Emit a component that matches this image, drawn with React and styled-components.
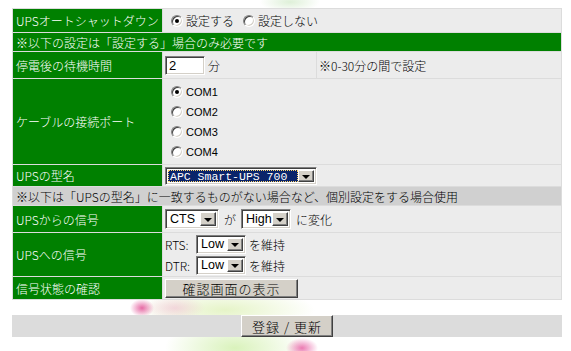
import React from "react";
import styled, { createGlobalStyle } from "styled-components";

const GlobalStyle = createGlobalStyle`
  html, body {
    margin: 0;
    padding: 0;
  }
  body {
    width: 571px;
    height: 351px;
    overflow: hidden;
    font-family: "Noto Sans CJK JP", "Noto Sans", sans-serif;
    font-size: 12px;
    font-weight: 300;
    color: #000;
    background:
      radial-gradient(ellipse 12px 9px at 142px 308px, rgba(226, 80, 150, 0.85), rgba(226, 80, 150, 0) 100%),
      radial-gradient(ellipse 16px 10px at 302px 348px, rgba(230, 90, 160, 0.8), rgba(230, 90, 160, 0) 100%),
      radial-gradient(ellipse 30px 12px at 175px 308px, rgba(240, 190, 210, 0.6), rgba(240, 190, 210, 0) 100%),
      radial-gradient(ellipse 70px 30px at 235px 348px, rgba(205, 238, 165, 0.75), rgba(205, 238, 165, 0) 100%),
      radial-gradient(ellipse 90px 22px at 225px 310px, rgba(225, 242, 190, 0.85), rgba(225, 242, 190, 0) 100%),
      radial-gradient(ellipse 30px 10px at 290px 2px, rgba(200, 230, 190, 0.6), rgba(200, 230, 190, 0) 100%),
      #fff;
  }
`;

const Page = styled.div`
  padding: 8px 9px 0 12px;
`;

const Table = styled.table`
  width: 550px;
  table-layout: fixed;
  border-collapse: separate;
  border-spacing: 1px;
  background: #dcdcdc;
`;

const Row = styled.tr`
  height: ${(p) => p.$h}px;
`;

const LabelCell = styled.td`
  background: #008000;
  color: #fff;
  padding: 0 3px;
  vertical-align: middle;
  white-space: nowrap;
`;

const ValueCell = styled.td`
  background: #ececec;
  padding: 0 2px;
  vertical-align: middle;
  white-space: nowrap;
`;

const NoteCell = styled.td`
  background: ${(p) => (p.$gray ? "#d0d0d0" : "#008000")};
  color: ${(p) => (p.$gray ? "#000" : "#fff")};
  padding: 0 3px;
  white-space: nowrap;
`;

const Inline = styled.div`
  display: flex;
  align-items: center;
  gap: ${(p) => p.$gap || 3}px;
`;

const Stack = styled.div`
  display: flex;
  flex-direction: column;
  gap: ${(p) => p.$gap || 0}px;
`;

const RadioLabel = styled.label`
  display: inline-flex;
  align-items: center;
  gap: 3px;
  margin-left: 6px;
  height: 20px;
  font-family: ${(p) => (p.$latin ? '"Liberation Sans", Arial, sans-serif' : "inherit")};
  font-size: ${(p) => (p.$latin ? 11 : 12)}px;
`;

const RadioDot = styled.span`
  position: relative;
  width: 12px;
  height: 12px;
  box-sizing: border-box;
  border-radius: 50%;
  background: #fff;
  border: 1px solid;
  border-color: #808080 #fff #fff #808080;
  box-shadow: inset 1px 1px 0 #404040, inset -1px -1px 0 #d4d0c8;
  &::after {
    content: "";
    display: ${(p) => (p.$on ? "block" : "none")};
    position: absolute;
    left: 3px;
    top: 3px;
    width: 4px;
    height: 4px;
    border-radius: 50%;
    background: #000;
  }
`;

const TextBox = styled.div`
  width: 40px;
  height: 19px;
  box-sizing: border-box;
  background: #fff;
  border: 1px solid;
  border-color: #808080 #fff #fff #808080;
  box-shadow: inset 1px 1px 0 #404040, inset -1px -1px 0 #d4d0c8;
  font-family: "Liberation Sans", Arial, sans-serif;
  font-size: 13px;
  font-weight: 400;
  line-height: 17px;
  padding-left: 3px;
`;

const SelectBox = styled.div`
  display: inline-flex;
  align-items: stretch;
  width: ${(p) => p.$w}px;
  height: ${(p) => p.$hgt || 20}px;
  box-sizing: border-box;
  background: #fff;
  border: 1px solid;
  border-color: #808080 #fff #fff #808080;
  box-shadow: inset 1px 1px 0 #404040, inset -1px -1px 0 #d4d0c8;
  padding: 2px;
`;

const SelectText = styled.div`
  flex: 1;
  display: flex;
  align-items: center;
  padding-left: 2px;
  font-family: ${(p) =>
    p.$sel ? '"Liberation Mono", "DejaVu Sans Mono", monospace' : '"Liberation Sans", Arial, sans-serif'};
  font-size: ${(p) => (p.$sel ? 11.5 : 12.5)}px;
  font-weight: 400;
  background: ${(p) => (p.$sel ? "#0a246a" : "transparent")};
  color: ${(p) => (p.$sel ? "#fff" : "#000")};
  outline: ${(p) => (p.$sel ? "1px dotted #ffd76e" : "none")};
  outline-offset: -1px;
  overflow: hidden;
  white-space: nowrap;
`;

const ArrowButton = styled.div`
  width: 16px;
  flex: none;
  box-sizing: border-box;
  background: #d4d0c8;
  border: 1px solid;
  border-color: #fff #404040 #404040 #fff;
  box-shadow: inset -1px -1px 0 #808080;
  display: flex;
  align-items: center;
  justify-content: center;
  &::after {
    content: "";
    border-left: 4px solid transparent;
    border-right: 4px solid transparent;
    border-top: 4px solid #000;
    margin-top: 1px;
  }
`;

const Button = styled.button`
  height: ${(p) => p.$h || 19}px;
  width: ${(p) => p.$w}px;
  background: #d4d0c8;
  border: 1px solid;
  border-color: #fff #404040 #404040 #fff;
  box-shadow: inset -1px -1px 0 #808080;
  font-family: "Noto Sans CJK JP", sans-serif;
  font-size: 13px;
  font-weight: 300;
  letter-spacing: 1px;
  padding: 0;
  line-height: 1;
  color: #000;
`;

const SignalLabel = styled.span`
  width: 28px;
`;

const BottomBar = styled.div`
  margin-top: 15px;
  width: 550px;
  height: 22px;
  background: #dcdcdc;
  display: flex;
  justify-content: center;
  align-items: flex-start;
`;

function Radio({ on, children, latin }) {
  return (
    <RadioLabel $latin={latin}>
      <RadioDot $on={on} />
      {children}
    </RadioLabel>
  );
}

function Select({ w, value, selected, h }) {
  return (
    <SelectBox $w={w} $hgt={h}>
      <SelectText $sel={selected}>{value}</SelectText>
      <ArrowButton />
    </SelectBox>
  );
}

export default function App() {
  return (
    <>
      <GlobalStyle />
      <Page>
        <Table>
          <colgroup>
            <col style={{ width: 149 }} />
            <col style={{ width: 153 }} />
            <col />
          </colgroup>
          <tbody>
            <Row $h={23}>
              <LabelCell>UPSオートシャットダウン</LabelCell>
              <ValueCell colSpan={2}>
                <Inline $gap={0}>
                  <Radio on>設定する</Radio>
                  <Radio>設定しない</Radio>
                </Inline>
              </ValueCell>
            </Row>
            <Row $h={18}>
              <NoteCell colSpan={3}>※以下の設定は「設定する」場合のみ必要です</NoteCell>
            </Row>
            <Row $h={26}>
              <LabelCell>停電後の待機時間</LabelCell>
              <ValueCell>
                <Inline>
                  <TextBox>2</TextBox>
                  <span>分</span>
                </Inline>
              </ValueCell>
              <ValueCell>※0-30分の間で設定</ValueCell>
            </Row>
            <Row $h={85}>
              <LabelCell>ケーブルの接続ポート</LabelCell>
              <ValueCell colSpan={2}>
                <Stack>
                  <Radio latin on>COM1</Radio>
                  <Radio latin>COM2</Radio>
                  <Radio latin>COM3</Radio>
                  <Radio latin>COM4</Radio>
                </Stack>
              </ValueCell>
            </Row>
            <Row $h={21}>
              <LabelCell>UPSの型名</LabelCell>
              <ValueCell colSpan={2}>
                <Select w={152} h={18} value="APC Smart-UPS 700" selected />
              </ValueCell>
            </Row>
            <Row $h={18}>
              <NoteCell $gray colSpan={3}>
                ※以下は「UPSの型名」に一致するものがない場合など、個別設定をする場合使用
              </NoteCell>
            </Row>
            <Row $h={26}>
              <LabelCell>UPSからの信号</LabelCell>
              <ValueCell colSpan={2}>
                <Inline $gap={5}>
                  <Select w={54} value="CTS" />
                  <span>が</span>
                  <Select w={50} value="High" />
                  <span>に変化</span>
                </Inline>
              </ValueCell>
            </Row>
            <Row $h={43}>
              <LabelCell>UPSへの信号</LabelCell>
              <ValueCell colSpan={2}>
                <Stack $gap={2}>
                  <Inline $gap={0}>
                    <SignalLabel>RTS:</SignalLabel>
                    <Select w={50} h={19} value="Low" />
                    <span>を維持</span>
                  </Inline>
                  <Inline $gap={0}>
                    <SignalLabel>DTR:</SignalLabel>
                    <Select w={50} h={19} value="Low" />
                    <span>を維持</span>
                  </Inline>
                </Stack>
              </ValueCell>
            </Row>
            <Row $h={22}>
              <LabelCell>信号状態の確認</LabelCell>
              <ValueCell colSpan={2}>
                <Button $w={133}>確認画面の表示</Button>
              </ValueCell>
            </Row>
          </tbody>
        </Table>
        <BottomBar>
          <Button $w={92} $h={22}>登録 / 更新</Button>
        </BottomBar>
      </Page>
    </>
  );
}
